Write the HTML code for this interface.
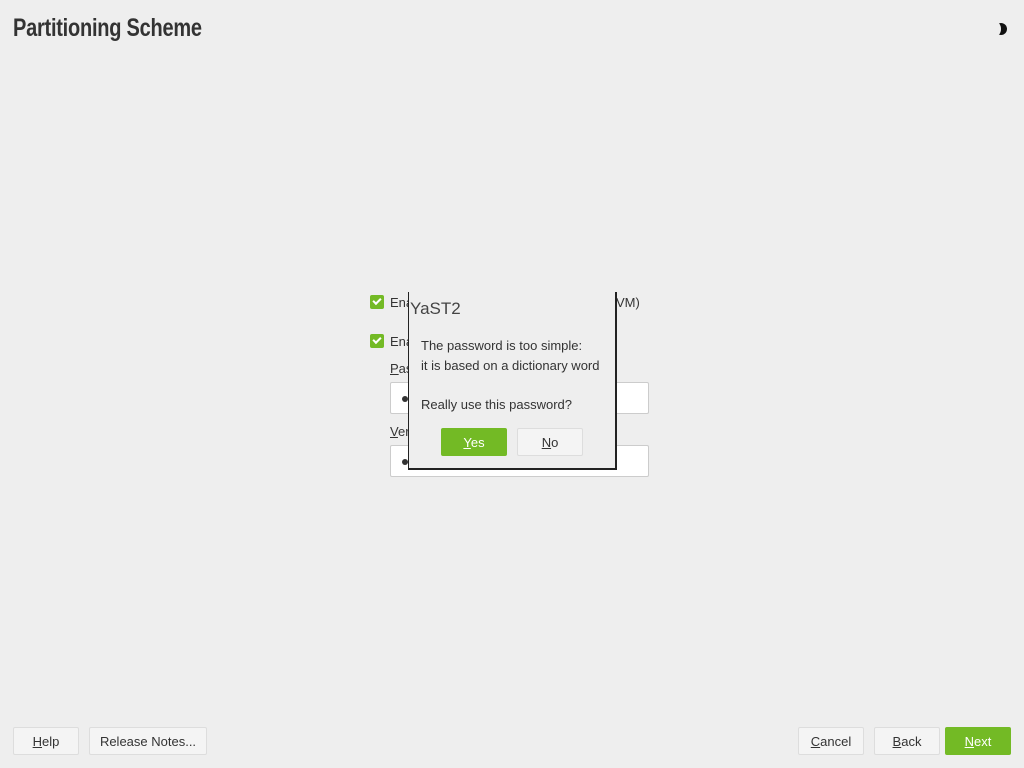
<!DOCTYPE html>
<html><head><meta charset="utf-8"><style>
body{margin:0;width:1024px;height:768px;background:#eeeeee;font-family:"Liberation Sans",sans-serif;font-size:13px;color:#333;position:relative;overflow:hidden}
.a{position:absolute}
h1{position:absolute;left:13px;top:14px;margin:0;font-family:"Liberation Sans Narrow","Liberation Sans",sans-serif;font-weight:bold;font-size:25px;color:#333;letter-spacing:-0.3px;transform:scaleX(0.8);transform-origin:left;white-space:nowrap}
.btn{position:absolute;height:28px;border:1px solid #ddd;background:#f4f4f4;border-radius:2px;box-sizing:border-box;text-align:center;line-height:28px;font-size:13px;color:#333}
.g{background:#73ba25;border-color:#73ba25;color:#fff}
.cb{position:absolute;width:14px;height:14px;background:#73ba25;border-radius:2px}
.cb:after{content:"";position:absolute;left:3px;top:3px;width:6px;height:3px;border-left:2px solid #fff;border-bottom:2px solid #fff;transform:rotate(-45deg)}
.in{position:absolute;left:390px;width:259px;height:32px;background:#fff;border:1px solid #ccc;border-radius:2px;box-sizing:border-box}
.dot{position:absolute;left:11px;top:13px;width:6px;height:6px;border-radius:50%;background:#333}
u{text-decoration:underline}
</style></head><body>
<h1>Partitioning Scheme</h1>
<div class="a" style="left:995px;top:23px;width:12px;height:12px;border-radius:50%;background:#111"></div>
<div class="a" style="left:991px;top:22px;width:10px;height:14px;border-radius:50%;background:#eee"></div>

<div class="cb" style="left:370px;top:295px"></div>
<div class="a" style="left:390px;top:295px">Enable Logical Volume Management (LVM)</div>
<div class="cb" style="left:370px;top:334px"></div>
<div class="a" style="left:390px;top:334px">Enable Disk Encryption</div>
<div class="a" style="left:390px;top:361px"><u>P</u>assword</div>
<div class="in" style="top:382px"><div class="dot"></div></div>
<div class="a" style="left:390px;top:424px"><u>V</u>erify Password</div>
<div class="in" style="top:445px"><div class="dot"></div></div>

<div class="a" style="left:408px;top:292px;width:206px;height:176px;background:#eeeeee;border-left:1px solid #222;border-right:2px solid #222;border-bottom:2px solid #222">
<div class="a" style="left:1px;top:7px;font-size:17px;color:#444">YaST2</div>
<div class="a" style="left:12px;top:44px;line-height:19.5px;white-space:nowrap">The password is too simple:<br>it is based on a dictionary word<br><br>Really use this password?</div>
<div class="btn g" style="left:32px;top:136px;width:66px"><u>Y</u>es</div>
<div class="btn" style="left:108px;top:136px;width:66px"><u>N</u>o</div>
</div>

<div class="btn" style="left:13px;top:727px;width:66px"><u>H</u>elp</div>
<div class="btn" style="left:89px;top:727px;width:118px">Release Notes...</div>
<div class="btn" style="left:798px;top:727px;width:66px"><u>C</u>ancel</div>
<div class="btn" style="left:874px;top:727px;width:66px"><u>B</u>ack</div>
<div class="btn g" style="left:945px;top:727px;width:66px"><u>N</u>ext</div>
</body></html>
